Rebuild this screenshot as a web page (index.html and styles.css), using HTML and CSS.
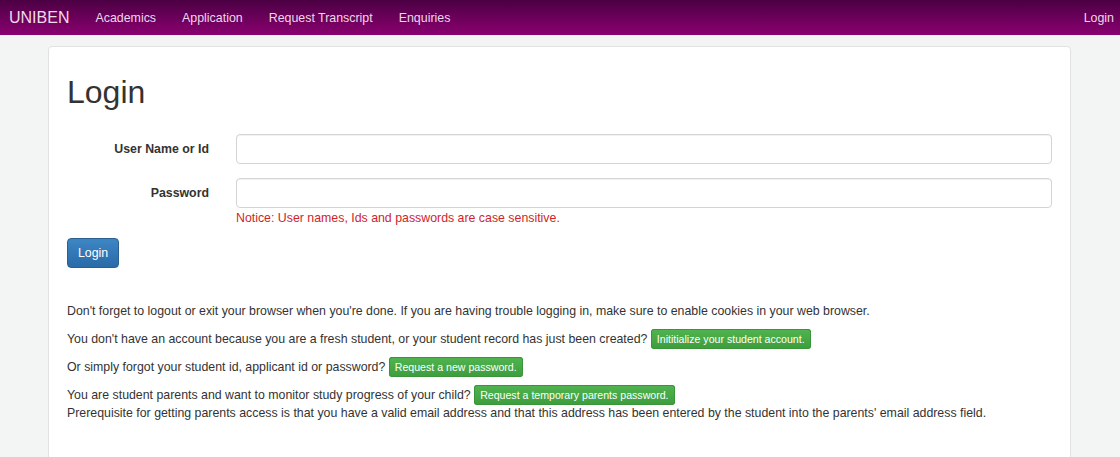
FILE: index.html
```html
<!DOCTYPE html>
<html lang="en">
<head>
<meta charset="utf-8">
<title>Login</title>
<link rel="stylesheet" href="styles.css">
</head>
<body>
<nav class="topbar">
  <a class="brand" href="#">UNIBEN</a>
  <ul class="nav-links">
    <li><a href="#">Academics</a></li>
    <li><a href="#">Application</a></li>
    <li><a href="#">Request Transcript</a></li>
    <li><a href="#">Enquiries</a></li>
  </ul>
  <a class="nav-login" href="#">Login</a>
</nav>
<main class="page">
  <section class="card">
    <h1 class="title">Login</h1>
    <form class="login-form">
      <div class="form-row">
        <label class="form-label" for="uid">User Name or Id</label>
        <div class="form-field"><input class="form-input" id="uid" type="text"></div>
      </div>
      <div class="form-row">
        <label class="form-label" for="pwd">Password</label>
        <div class="form-field">
          <input class="form-input" id="pwd" type="password">
          <p class="notice">Notice: User names, Ids and passwords are case sensitive.</p>
        </div>
      </div>
      <button class="btn-primary" type="button">Login</button>
    </form>
    <div class="info">
      <p>Don't forget to logout or exit your browser when you're done. If you are having trouble logging in, make sure to enable cookies in your web browser.</p>
      <p>You don't have an account because you are a fresh student, or your student record has just been created? <a class="tag" href="#">Inititialize your student account.</a></p>
      <p>Or simply forgot your student id, applicant id or password? <a class="tag" href="#">Request a new password.</a></p>
      <p>You are student parents and want to monitor study progress of your child? <a class="tag" href="#">Request a temporary parents password.</a><br>Prerequisite for getting parents access is that you have a valid email address and that this address has been entered by the student into the parents' email address field.</p>
    </div>
  </section>
</main>
</body>
</html>
```

FILE: styles.css
```css
* { box-sizing: border-box; }
html, body { margin: 0; padding: 0; }
body {
  background: #f3f4f4;
  font-family: "Liberation Sans", Arial, Helvetica, sans-serif;
  font-size: 12.35px;
  color: #333;
}
a { text-decoration: none; }

.topbar {
  display: flex;
  align-items: center;
  height: 35px;
  padding: 0 6px 0 9px;
  background: linear-gradient(to bottom, #4b0043 0%, #6b005a 50%, #8a0070 100%);
}
.brand {
  color: #f2d9ec;
  font-size: 16px;
  padding-right: 13px;
}
.nav-links {
  display: flex;
  list-style: none;
  margin: 0;
  padding: 0;
  flex: 1;
}
.nav-links a, .nav-login {
  display: block;
  color: #f0d6ea;
  font-size: 12.4px;
  padding: 0 13px;
}
.nav-login { padding: 0; }

.page {
  padding: 11px 49px 0 48px;
}
.card {
  background: #fff;
  border: 1px solid #e2e2e2;
  border-radius: 4px;
  padding: 0 18px 40px 18px;
  min-height: 420px;
}
.title {
  margin: 25px 0 0;
  font-size: 32px;
  font-weight: 400;
  line-height: 40px;
  color: #333;
}
.login-form {
  margin-top: 22px;
}
.form-row {
  display: grid;
  grid-template-columns: 142px 1fr;
  column-gap: 27px;
  margin-bottom: 14px;
}
.form-label {
  text-align: right;
  font-weight: bold;
  line-height: 30px;
  height: 30px;
}
.form-input {
  display: block;
  width: 100%;
  height: 30px;
  border: 1px solid #d4d4d4;
  border-radius: 4px;
  box-shadow: inset 0 1px 1px rgba(0,0,0,0.06);
  background: #fff;
  padding: 4px 10px;
  font: inherit;
}
.notice {
  margin: 1px 0 0;
  line-height: 18px;
  color: #d0242b;
}
.form-row:nth-child(2) { margin-bottom: 11px; }
.btn-primary {
  display: block;
  height: 30px;
  padding: 0 10px;
  font: inherit;
  color: #fff;
  border: 1px solid #2b5f8f;
  border-radius: 4px;
  background: linear-gradient(to bottom, #3d86c4 0%, #2a6aa8 100%);
}
.info {
  margin-top: 34px;
}
.info p {
  margin: 0 0 10px;
  line-height: 18px;
}
.tag {
  display: inline;
  padding: 3px 5px;
  font-size: 10.6px;
  color: #fff;
  border-radius: 3px;
  background: linear-gradient(to bottom, #4fb34f 0%, #3e9e3e 100%);
  border: 1px solid #3a953a;
}
```
